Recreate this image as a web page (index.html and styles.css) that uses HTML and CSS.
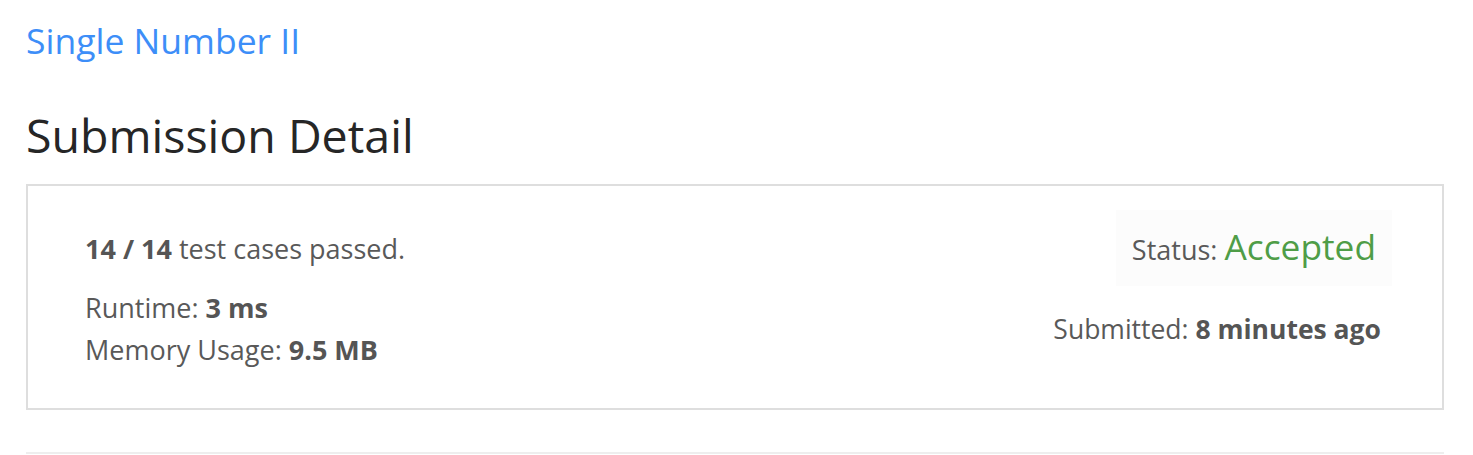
FILE: index.html
```html
<!DOCTYPE html>
<html>
<head>
<meta charset="utf-8">
<link rel="stylesheet" href="styles.css">
</head>
<body>
<div class="container">
  <a class="problem-link" href="#">Single Number II</a>
  <h2 class="page-title">Submission Detail</h2>
  <div class="panel">
    <div class="left">
      <p class="passed"><b>14 / 14</b> test cases passed.</p>
      <div class="stats">
        <div>Runtime: <b>3 ms</b></div>
        <div>Memory Usage: <b>9.5 MB</b></div>
      </div>
    </div>
    <div class="right">
      <div class="status">Status: <span class="accepted">Accepted</span></div>
      <div class="submitted">Submitted: <b>8 minutes ago</b></div>
    </div>
  </div>
  <hr class="divider">
</div>
</body>
</html>
```

FILE: styles.css
```css
html, body {
  margin: 0;
  padding: 0;
  background: #fff;
}
body {
  font-family: "Open Sans", "Noto Sans", sans-serif;
  color: #595959;
}
.container {
  width: 1418px;
  margin-left: 26px;
  padding-top: 16px;
}
.problem-link {
  display: block;
  font-size: 35.5px;
  line-height: 48px;
  color: #3d8ef8;
  text-decoration: none;
}
.page-title {
  margin: 41px 0 19px 0;
  font-size: 46.5px;
  line-height: 60px;
  font-weight: 400;
  color: #262626;
}
.panel {
  border: 2px solid #dedede;
  box-sizing: border-box;
  height: 226px;
  display: flex;
  justify-content: space-between;
  padding: 0 50px 0 57px;
}
.left {
  padding-top: 43px;
  font-size: 27px;
}
.passed {
  margin: 0 0 18px 0;
  line-height: 40px;
}
.stats {
  line-height: 42px;
}
b {
  font-weight: 700;
  color: #555;
}
.right {
  padding-top: 24px;
  display: flex;
  flex-direction: column;
  align-items: flex-end;
  font-size: 27px;
}
.status {
  background: #fcfcfc;
  padding: 3px 16px 0 16px;
  height: 73px;
  line-height: 73px;
}
.accepted {
  color: #4f9d47;
  font-size: 35.3px;
  line-height: 1;
}
.submitted {
  margin-top: 23px;
  padding-right: 11px;
  line-height: 40px;
  font-size: 26.5px;
}
.divider {
  margin: 42px 0 0 0;
  border: 0;
  border-top: 2px solid #eeeeee;
}
```
